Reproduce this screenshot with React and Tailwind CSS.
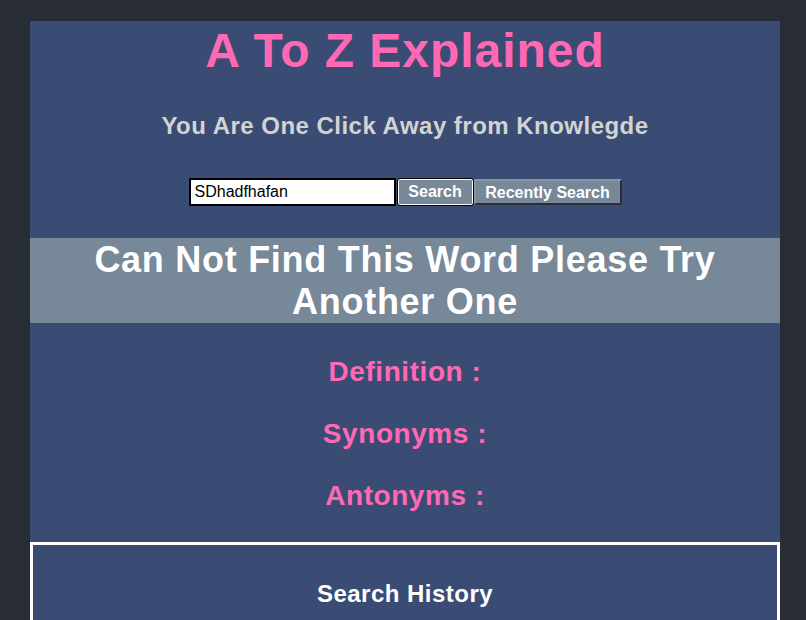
const App = () => {
  const fields = ['Definition :', 'Synonyms :', 'Antonyms :'];

  return (
    <div className="min-h-[620px] bg-[#282c34] pt-[21px] font-['Liberation_Sans',Arial,sans-serif]">
      <div className="ml-[30px] w-[750px] bg-[#3a4c73] text-center">
        <h1 className="pt-[2px] text-[48px] leading-[55px] font-bold tracking-[0.02em] text-[#ff69b4]">A To Z Explained</h1>
        <h2 className="mt-[34px] text-[24px] leading-[28px] font-bold tracking-[0.02em] text-[#d3d3d3]">
          You Are One Click Away from Knowlegde
        </h2>

        <div className="mt-[38px] flex justify-center items-start">
          <input
            defaultValue="SDhadfhafan"
            className="w-[207px] h-[28px] border-2 border-black bg-white px-[4px] text-[16px] text-black outline-none"
          />
          <button className="ml-px h-[28px] w-[77px] rounded-[3px] border border-black bg-[#778899] text-[16px] font-bold text-white shadow-[inset_0_0_0_1px_#fff]">
            Search
          </button>
          <button className="mt-px h-[26px] w-[148px] border-2 border-t-[#8696a6] border-l-[#8696a6] border-r-[#2a2f38] border-b-[#2a2f38] bg-[#778899] text-[16px] font-bold text-white">
            Recently Search
          </button>
        </div>

        <div className="mt-[32px] bg-[#778899] py-px text-[36px] leading-[41.5px] font-bold tracking-[0.02em] text-white">
          <p className="px-[30px]">Can Not Find This Word Please Try Another One</p>
        </div>

        <div className="pt-[33px] pb-[30px] flex flex-col gap-[30px]">
          {fields.map((f) => (
            <h3 key={f} className="text-[28px] leading-[32px] font-bold tracking-[0.02em] text-[#ff69b4]">
              {f}
            </h3>
          ))}
        </div>

        <div className="border-[3px] border-white pt-[35px] pb-[40px]">
          <h3 className="text-[24px] leading-[28px] font-bold tracking-[0.02em] text-white">Search History</h3>
        </div>
      </div>
    </div>
  );
};

export default App;
